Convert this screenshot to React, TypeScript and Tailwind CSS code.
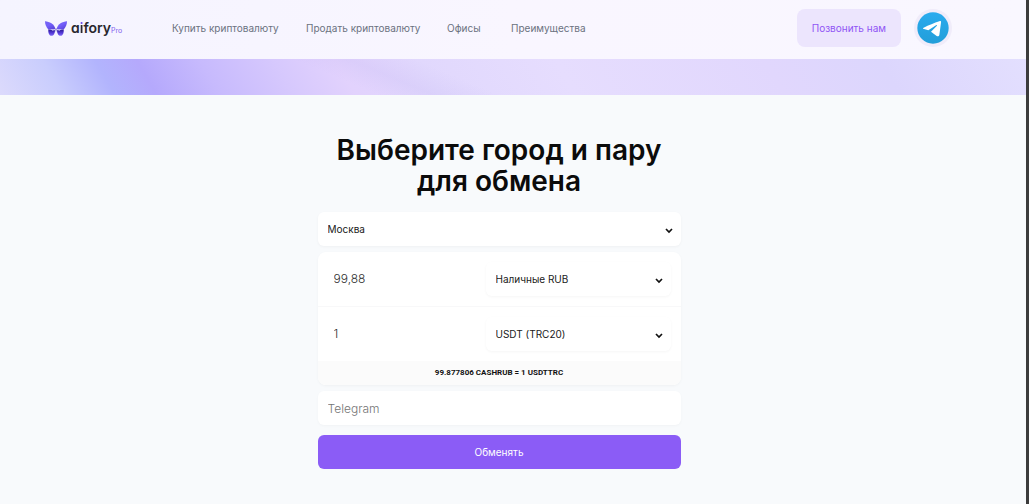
import { ChangeEvent, ReactNode, useState } from "react";

const links = [
  { label: "Купить криптовалюту", href: "#buy", width: "w-[134px]" },
  { label: "Продать криптовалюту", href: "#sell", width: "w-[141px]" },
  { label: "Офисы", href: "#offices", width: "w-16" },
  { label: "Преимущества", href: "#benefits", width: "w-20" },
];

function Butterfly() {
  return (
    <svg viewBox="0 0 66 44" className="h-[15px] w-[22px]" aria-hidden="true">
      <defs>
        <linearGradient id="wing" x1="0" y1="0" x2="0.7" y2="1">
          <stop offset="0" stopColor="#7562f2" />
          <stop offset="0.5" stopColor="#7460fa" />
          <stop offset="1" stopColor="#5a45dc" />
        </linearGradient>
        <linearGradient id="tail" x1="0" y1="0" x2="0" y2="1">
          <stop offset="0" stopColor="#2c1a94" />
          <stop offset="0.5" stopColor="#5136d5" />
          <stop offset="1" stopColor="#8168f8" />
        </linearGradient>
      </defs>
      <path d="M0 0C14 1 27 8 31 22L28 25L10 25C4 18 0 10 0 0Z" fill="url(#wing)" />
      <path d="M66 0C52 1 39 8 35 22L38 25L56 25C62 18 66 10 66 0Z" fill="url(#wing)" />
      <path d="M10 25L30 27C30 36 26 44 19 44C12 44 9 34 10 25Z" fill="url(#tail)" />
      <path d="M56 25L36 27C36 36 40 44 47 44C54 44 57 34 56 25Z" fill="url(#tail)" />
      <path d="M17 24L29 26L23 29ZM49 24L37 26L43 29Z" fill="#d9d2ff" />
      <path d="M31 22H35L34 31H32Z" fill="#6a5ac8" />
    </svg>
  );
}

function TelegramIcon() {
  return (
    <svg viewBox="0 0 96 96" className="size-8" aria-hidden="true">
      <defs>
        <linearGradient id="telegram" x1="0" y1="0" x2="0" y2="1">
          <stop offset="0" stopColor="#2aabee" />
          <stop offset="1" stopColor="#229ed9" />
        </linearGradient>
      </defs>
      <circle cx="48" cy="48" r="47" fill="url(#telegram)" />
      <path
        d="M20 47C35 40 52 33 67 28C71 26 73 28 72 32L67 69C66 73 62 74 58 71L42 59L59 42C61 39 60 38 57 40L34 55L21 51C17 50 17 48 20 47Z"
        fill="white"
      />
    </svg>
  );
}

function Dropdown({ label, options }: { label: string; options: string[] }) {
  return (
    <div className="relative rounded-md bg-white shadow-[0_1px_3px_rgba(0,0,0,0.04)]">
      <select
        aria-label={label}
        className="h-[34px] w-full appearance-none rounded-md bg-transparent pr-7 pl-2.5 text-[10px] text-[#202020] outline-none"
      >
        {options.map((option) => (
          <option key={option}>{option}</option>
        ))}
      </select>
      <svg viewBox="0 0 8 6" className="pointer-events-none absolute top-4 right-2 h-1.5 w-2" aria-hidden="true">
        <path d="M1 1L4 4L7 1" fill="none" stroke="#111" strokeWidth="1.7" />
      </svg>
    </div>
  );
}

function AmountRow({ label, initial, children }: { label: string; initial: string; children: ReactNode }) {
  const [value, setValue] = useState(initial);
  return (
    <div className="flex items-center py-2.5 pr-2.5 pl-4">
      <input
        aria-label={label}
        value={value}
        onChange={(event: ChangeEvent<HTMLInputElement>) => setValue(event.target.value)}
        className="min-w-0 flex-1 bg-transparent text-xs font-light text-[#303030] outline-none"
      />
      <div className="w-[185px] shrink-0">{children}</div>
    </div>
  );
}

export default function App() {
  return (
    <div className="min-h-screen border-r-3 border-[#3c3c3c] bg-[#f8fafc] font-['Inter','Open_Sans',sans-serif]">
      <header className="bg-linear-to-r from-[#f5f4ff] via-[#f9f6ff] to-[#f9f7ff]">
        <div className="flex h-[59px] items-center pr-[74px] pb-[3px] pl-[45px]">
          <a href="#home" className="flex w-[127px] shrink-0 items-center gap-1" aria-label="aifory Pro">
            <Butterfly />
            <span className="flex items-baseline">
              <span className="text-sm leading-5 font-semibold text-[#29282e] [font-feature-settings:'cv11']">
                a
                <span className="bg-[linear-gradient(#7150ee_0_6px,#29282e_6px)] bg-clip-text text-transparent">i</span>
                fory
              </span>
              <span className="text-[7px] text-[#8260ee]">Pro</span>
            </span>
          </a>
          <nav className="flex text-[10px] whitespace-nowrap text-[#6b7280]">
            {links.map((link) => (
              <a key={link.href} href={link.href} className={link.width}>
                {link.label}
              </a>
            ))}
          </nav>
          <div className="ml-auto flex shrink-0 items-center gap-[13px]">
            <button className="h-[38px] rounded-lg bg-[#ece5fd] px-[15px] text-[10px] text-[#9055f5]">Позвонить нам</button>
            <a href="#telegram" aria-label="Telegram" className="rounded-full bg-[#f0ecfa] p-[3px]">
              <TelegramIcon />
            </a>
          </div>
        </div>
      </header>
      <div className="h-9 bg-[linear-gradient(23deg,transparent_34%,rgba(190,180,240,0.2)_39%,transparent_45%),linear-gradient(60deg,#dcdafc_0%,#c9cdfd_6%,#b2b4fd_11%,#b5a9fc_15%,#c7bafd_21%,#d6c8fd_28%,#e2d2fd_34%,#e1d8fd_42%,#e6ddfe_55%,#e1d7fd_75%,#dcd6fd_86%,#e3dffe_100%)]" />
      <main className="pt-10 pr-7 pb-8">
        <h1 className="text-center text-[28px] leading-[31px] font-semibold text-[#0b0b0b]">
          Выберите город и пару
          <br />
          для обмена
        </h1>
        <form className="mx-auto mt-[15px] w-full max-w-[363px]" onSubmit={(event) => event.preventDefault()}>
          <Dropdown label="Город" options={["Москва", "Санкт-Петербург"]} />
          <section className="mt-1.5 overflow-hidden rounded-lg bg-white shadow-[0_1px_3px_rgba(0,0,0,0.04)]">
            <AmountRow label="Отдаёте" initial="99,88">
              <Dropdown label="Валюта отдачи" options={["Наличные RUB"]} />
            </AmountRow>
            <div className="border-t border-[#f8f8f9]">
              <AmountRow label="Получаете" initial="1">
                <Dropdown label="Валюта получения" options={["USDT (TRC20)"]} />
              </AmountRow>
            </div>
            <p className="bg-[#fbfbfb] text-center font-['Roboto','Inter',sans-serif] text-[8px] leading-6 font-bold text-[#111]">
              99.877806 CASHRUB = 1 USDTTRC
            </p>
          </section>
          <input
            aria-label="Telegram"
            placeholder="Telegram"
            className="mt-1.5 block h-[34px] w-full rounded-md bg-white px-2.5 text-xs font-light shadow-[0_1px_3px_rgba(0,0,0,0.03)] outline-none placeholder:text-[#757575]"
          />
          <button className="mt-2.5 block h-[34px] w-full rounded-md bg-[#8b5cf6] text-[10px] text-white">Обменять</button>
        </form>
      </main>
    </div>
  );
}
